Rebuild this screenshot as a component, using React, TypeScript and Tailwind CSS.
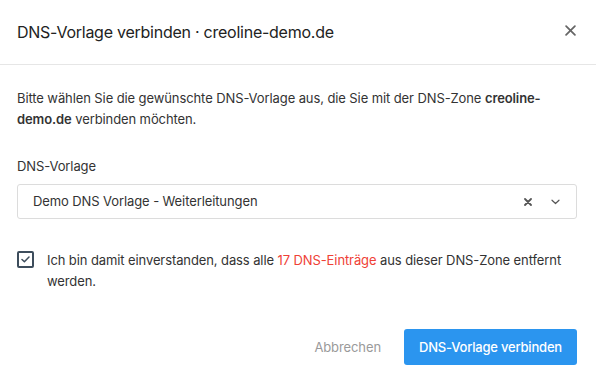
import React from "react";

export default function App() {
  return (
    <div className="w-[596px] h-[383px] bg-white text-[#333] overflow-hidden" style={{ fontFamily: "Inter, 'Noto Sans', sans-serif" }}>
      <div className="h-[65px] flex items-center justify-between pl-[17px] pr-[20px] border-b border-[#e6e6e6]">
        <div className="text-[16px] text-[#222] tracking-[-0.25px]">DNS-Vorlage verbinden · creoline-demo.de</div>
        <svg width="11" height="11" viewBox="0 0 10 10" className="mt-[-3px]">
          <path d="M1 1L9 9M9 1L1 9" stroke="#666" strokeWidth="1.6" strokeLinecap="round" />
        </svg>
      </div>
      <div className="pl-[17px] pr-[19px] pt-[23px] text-[13px] leading-[21px] tracking-[-0.1px]">
        <p>
          Bitte wählen Sie die gewünschte DNS-Vorlage aus, die Sie mit der DNS-Zone <span className="font-semibold">creoline-<br />demo.de</span> verbinden möchten.
        </p>
        <div className="mt-[26px]">DNS-Vorlage</div>
        <div className="mt-[7px] h-[35px] border border-[#dcdcdc] rounded-[3px] flex items-center pl-[15px] pr-[16px]">
          <span className="flex-1">Demo DNS Vorlage - Weiterleitungen</span>
          <svg width="8" height="8" viewBox="0 0 8 8" className="mr-[19px]">
            <path d="M1 1L7 7M7 1L1 7" stroke="#555" strokeWidth="1.8" strokeLinecap="round" />
          </svg>
          <svg width="9" height="6" viewBox="0 0 9 6">
            <path d="M1 1.2L4.5 4.5L8 1.2" stroke="#555" strokeWidth="1.2" fill="none" strokeLinecap="round" strokeLinejoin="round" />
          </svg>
        </div>
        <div className="mt-[31px] flex items-start">
          <div className="w-[17px] h-[17px] border-2 border-[#3d4d5c] rounded-[2px] flex items-center justify-center mt-[1px] shrink-0">
            <svg width="9" height="7" viewBox="0 0 9 7">
              <path d="M1 3.5L3.4 5.8L8 1" stroke="#3d4d5c" strokeWidth="1.5" fill="none" strokeLinecap="round" strokeLinejoin="round" />
            </svg>
          </div>
          <p className="ml-[13px]">
            Ich bin damit einverstanden, dass alle <span className="text-[#ef4136]">17 DNS-Einträge</span> aus dieser DNS-Zone entfernt<br />werden.
          </p>
        </div>
        <div className="mt-[37px] flex justify-end items-center">
          <span className="text-[#9a9a9a] mr-[23px]">Abbrechen</span>
          <button className="h-[36px] w-[173px] rounded-[3px] bg-[#2b95ef] text-white text-[13px] font-medium tracking-[-0.2px]">DNS-Vorlage verbinden</button>
        </div>
      </div>
    </div>
  );
}
